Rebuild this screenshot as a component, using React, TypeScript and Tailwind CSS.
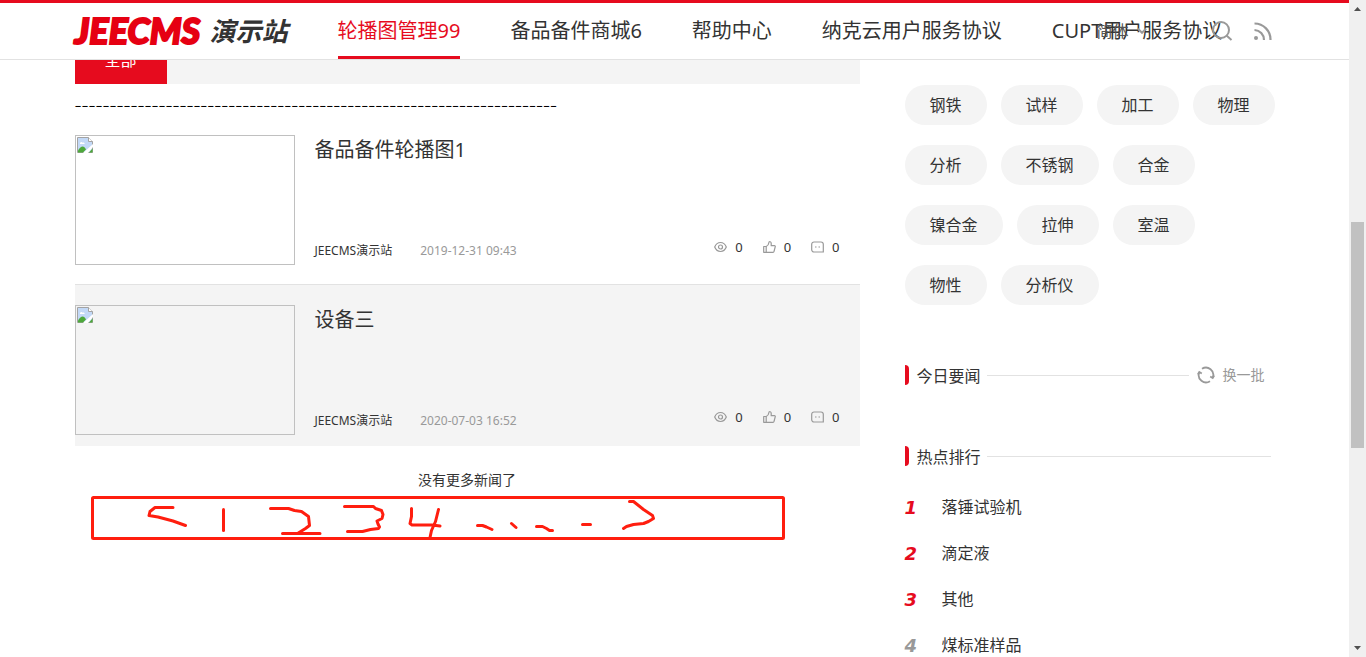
import type { ReactNode } from 'react'

type NewsItem = {
  title: string
  source: string
  time: string
  active?: boolean
}

const navItems = ['轮播图管理99', '备品备件商城6', '帮助中心', '纳克云用户服务协议', 'CUPT用户服务协议']

const news: NewsItem[] = [
  { title: '备品备件轮播图1', source: 'JEECMS演示站', time: '2019-12-31 09:43' },
  { title: '设备三', source: 'JEECMS演示站', time: '2020-07-03 16:52', active: true },
]

const tags = ['钢铁', '试样', '加工', '物理', '分析', '不锈钢', '合金', '镍合金', '拉伸', '室温', '物性', '分析仪']

const ranks = ['落锤试验机', '滴定液', '其他', '煤标准样品']

/** 图片加载失败时的占位 */
function BrokenImage() {
  return (
    <div className="h-[130px] w-[220px] shrink-0 border border-[#c0c0c0] p-px">
      <svg width="16" height="16" viewBox="0 0 16 16" role="img" aria-label="图片">
        <path d="M.5.5h11l4 4v11H.5z" fill="#c3d9f7" stroke="#a3a3a3" />
        <path d="M11.5.5v4h4" fill="#fff" stroke="#a3a3a3" />
        <path d="M3 6.5c0-1.5 2-2 2.500-.8C7 5 8 6 7.500 7H3z" fill="#fff" />
        <path d="M1 15.500v-2c3-5 6-5 8-1l-3 3z" fill="#4da83a" />
        <path d="M6 16l10-9v3l-5 6z" fill="#fff" />
        <path d="M12 15.500l3.500-4v4z" fill="#4da83a" />
      </svg>
    </div>
  )
}

function EyeIcon() {
  return (
    <svg width="13" height="12" viewBox="0 0 13 12" fill="none" stroke="#999" strokeWidth="1.200">
      <path d="M.7 6C2 2.800 4 1.500 6.500 1.500S11 2.800 12.300 6C11 9.200 9 10.500 6.500 10.500S2 9.200.7 6z" />
      <circle cx="6.500" cy="6" r="2" />
    </svg>
  )
}

function LikeIcon() {
  return (
    <svg width="13" height="12" viewBox="0 0 13 12" fill="none" stroke="#999" strokeWidth="1.200" strokeLinejoin="round">
      <path d="M.7 5.500h2.500v5.800H.7zM3.200 5.500C5.200 4.500 5.800 3 6 1.200c.2-.9 2.200-.7 2.200 1v2.500h3.200c.7 0 1 .5.800 1.200l-1.200 4.600c-.1.500-.5.800-1 .8H3.200" />
    </svg>
  )
}

function CommentIcon() {
  return (
    <svg width="13" height="12" viewBox="0 0 13 12" fill="none" stroke="#999" strokeWidth="1.200">
      <path d="M3 1h7a2.300 2.300 0 0 1 2.300 2.300V11H3A2.300 2.300 0 0 1 .7 8.700V3.300A2.300 2.300 0 0 1 3 1z" />
      <path d="M4 6h1.500M7.500 6H9" />
    </svg>
  )
}

function Stat({ icon, label }: { icon: ReactNode; label: string }) {
  return (
    <span className="flex items-center gap-2" aria-label={label}>
      {icon}
      <span>0</span>
    </span>
  )
}

function NewsRow({ item }: { item: NewsItem }) {
  return (
    <li
      className={
        item.active
          ? 'flex gap-5 bg-[#f4f4f4] pt-5 pr-5 pb-[11px]'
          : 'flex gap-5 border-b border-[#e2e2e2] pt-5 pr-5 pb-[19px]'
      }
    >
      <BrokenImage />
      <div className="flex min-w-0 flex-1 flex-col justify-between">
        <h3 className="text-xl leading-[30px]">
          <a href="#">{item.title}</a>
        </h3>
        <div className="flex items-start justify-between text-xs leading-5">
          <div className="flex gap-7 pt-1">
            <a href="#">{item.source}</a>
            <span className="text-[#999]">{item.time}</span>
          </div>
          <div className="flex gap-5 pb-2 text-[13px]">
            <Stat icon={<EyeIcon />} label="浏览" />
            <Stat icon={<LikeIcon />} label="点赞" />
            <Stat icon={<CommentIcon />} label="评论" />
          </div>
        </div>
      </div>
    </li>
  )
}

/** 侧栏标题，右侧带分隔线 */
function SideTitle({ title, children }: { title: string; children?: ReactNode }) {
  return (
    <div className="flex h-5 items-center">
      <span className="h-5 w-1 rounded-r bg-[#e60b1e]" />
      <h2 className="mr-1.5 ml-2 pt-0.5 text-base leading-5">{title}</h2>
      <span className="h-px flex-1 bg-[#e2e2e2]" />
      {children}
    </div>
  )
}

/** 手绘分页标注 */
function PagerSketch() {
  return (
    <svg
      className="mt-1.5 ml-4"
      width="694"
      height="44"
      viewBox="91 496 694 44"
      fill="none"
      stroke="#ff1e0f"
      strokeWidth="3"
      strokeLinecap="round"
      strokeLinejoin="round"
    >
      <rect x="92.500" y="497.500" width="691" height="41" rx="1" />
      <path d="M173 507.500h-18l-5 4-1 4 9 1.500 15 4 12.500 4.500" />
      <path d="M223.500 509.500v21" />
      <path d="M270.500 508.500h18l6 2 7 1 7 5 1 9-4 3-8 5M282.500 533.500h37.500" />
      <path d="M344.500 506.500h29l2 2 6 2 1.500 4-1 4-5 2.500 1 3 1.500 3-1 1.500-8 1-8 2h-15" />
      <path d="M411.500 508.500v8l-1.500 7 2 1.500h20l8 1M438.500 509.500l-3 12-4 9-1.500 7" />
      <path d="M477.500 525.500h5l4 1.500 5.500 2.500M511.500 523.500l4.500 4" />
      <path d="M536.500 526.500h6l4 2 3 2h3M582.500 524.500h8" />
      <path d="M629.500 501.500h4l10 8 9 6 1 3-5 3-5 2-10 1-7 2-3 2" />
    </svg>
  )
}

function Header() {
  return (
    <header className="relative z-10 h-[60px] shrink-0 border-t-3 border-b border-t-[#e60b1e] border-b-[#e2e2e2] bg-white">
      <div className="relative mx-auto flex h-full max-w-[1200px] gap-[50px]">
        <a href="#" className="flex w-[213px] shrink-0 items-center justify-between pb-0.5 whitespace-nowrap italic">
          <span className="font-['Lato',sans-serif] text-4xl leading-10 font-black text-[#e60012] [-webkit-text-stroke:2px_#e60012]">
            JEECMS
          </span>
          <span className="font-['Noto_Sans_CJK_SC',sans-serif] text-[26px] leading-10 font-bold">演示站</span>
        </a>
        <nav className="flex gap-[50px] text-xl whitespace-nowrap">
          {navItems.map((name, i) => (
            <a
              key={name}
              href="#"
              className={
                i === 0
                  ? 'flex items-center border-b-3 border-[#e60b1e] pt-[3px] text-[#e60b1e]'
                  : 'flex items-center'
              }
            >
              {name}
            </a>
          ))}
        </nav>
        <div className="absolute inset-y-0 right-0 flex items-center">
          <button type="button" className="mr-16 flex items-center gap-2 text-base text-[#555]">
            简体
            <svg width="10" height="6" viewBox="0 0 10 6" fill="none" stroke="#999" strokeWidth="2">
              <path d="M1 .8l4 4 4-4" />
            </svg>
          </button>
          <button type="button" aria-label="搜索" className="mr-5">
            <svg width="22" height="22" viewBox="0 0 22 22" fill="none" stroke="#999" strokeWidth="2">
              <circle cx="10" cy="10" r="8" />
              <path d="M15.500 15.500l5 4.500" />
            </svg>
          </button>
          <a href="#" aria-label="RSS" className="mr-0.5">
            <svg width="20" height="20" viewBox="0 0 20 20" fill="none" stroke="#999" strokeWidth="2.200">
              <path d="M1.500 2.500A16 16 0 0 1 17.500 19M1.500 9A10 10 0 0 1 11 19" />
              <circle cx="3" cy="17" r="2" fill="#999" stroke="none" />
            </svg>
          </a>
        </div>
      </div>
    </header>
  )
}

export default function App() {
  return (
    <div className="flex h-screen overflow-hidden bg-white font-['Noto_Sans','Noto_Sans_CJK_SC',sans-serif] text-[#333]">
      <div className="flex min-w-0 flex-1 flex-col overflow-hidden">
        <Header />
        {/* 页面已向下滚动，标签栏上半部分被头部遮住 */}
        <main className="mx-auto -mt-6 flex w-full max-w-[1200px] justify-between">
          <section className="w-[785px] shrink-0">
            <div className="flex bg-[#f4f4f4]">
              <button type="button" className="h-12 bg-[#e60b1e] px-[30px] text-base text-white">
                全部
              </button>
            </div>
            <p className="pt-2 font-['Noto_Sans_CJK_SC',sans-serif] text-[21px] leading-[23px] font-light whitespace-nowrap text-black">
              {'-'.repeat(69)}
            </p>
            <ul>
              {news.map((item) => (
                <NewsRow key={item.title} item={item} />
              ))}
            </ul>
            <p className="pt-6 text-center text-sm">没有更多新闻了</p>
            <PagerSketch />
          </section>

          <aside className="w-[370px] shrink-0 pt-[49px]">
            <div className="-mr-1 flex flex-wrap gap-x-3.5 gap-y-5">
              {tags.map((tag) => (
                <a key={tag} href="#" className="h-10 rounded-full bg-[#f4f4f4] px-[25px] text-base leading-10">
                  {tag}
                </a>
              ))}
            </div>
            <div className="pt-[60px] pr-1">
              <SideTitle title="今日要闻">
                <button type="button" className="mr-1.5 ml-2 flex items-center gap-2 text-sm text-[#999]">
                  <svg width="18" height="18" viewBox="0 0 18 18" fill="none" stroke="#999" strokeWidth="1.800">
                    <path d="M5 2.800A7.300 7.300 0 0 1 15.800 11.500M13 15.200A7.300 7.300 0 0 1 2.200 6.500" />
                    <path d="M17.200 9.500l-1.500 2.500-2.500-1.500M.8 8.500L2.300 6l2.500 1.500" />
                  </svg>
                  换一批
                </button>
              </SideTitle>
            </div>
            <div className="pt-[61px] pr-1">
              <SideTitle title="热点排行" />
            </div>
            <ol className="pt-[18px]">
              {ranks.map((name, i) => (
                <li key={name} className="flex h-[46px] items-center">
                  <span
                    className={
                      i < 3
                        ? "w-[37px] pt-0.5 font-['DejaVu_Sans',sans-serif] text-lg leading-6 font-bold text-[#e60b1e] italic"
                        : "w-[37px] pt-0.5 font-['DejaVu_Sans',sans-serif] text-lg leading-6 font-bold text-[#999] italic"
                    }
                  >
                    {i + 1}
                  </span>
                  <a href="#" className="text-base">
                    {name}
                  </a>
                </li>
              ))}
            </ol>
          </aside>
        </main>
      </div>

      {/* 滚动条 */}
      <div className="flex w-[17px] shrink-0 flex-col items-center justify-between bg-[#f0f0f0] py-[7px]">
        <svg width="7" height="4" viewBox="0 0 7 4">
          <path d="M0 4L3.500 0 7 4z" fill="#505050" />
        </svg>
        <div className="mt-3 h-[226px] w-[13px] bg-[#c1c1c1]" />
        <svg width="7" height="4" viewBox="0 0 7 4">
          <path d="M0 0l3.500 4L7 0z" fill="#505050" />
        </svg>
      </div>
    </div>
  )
}
